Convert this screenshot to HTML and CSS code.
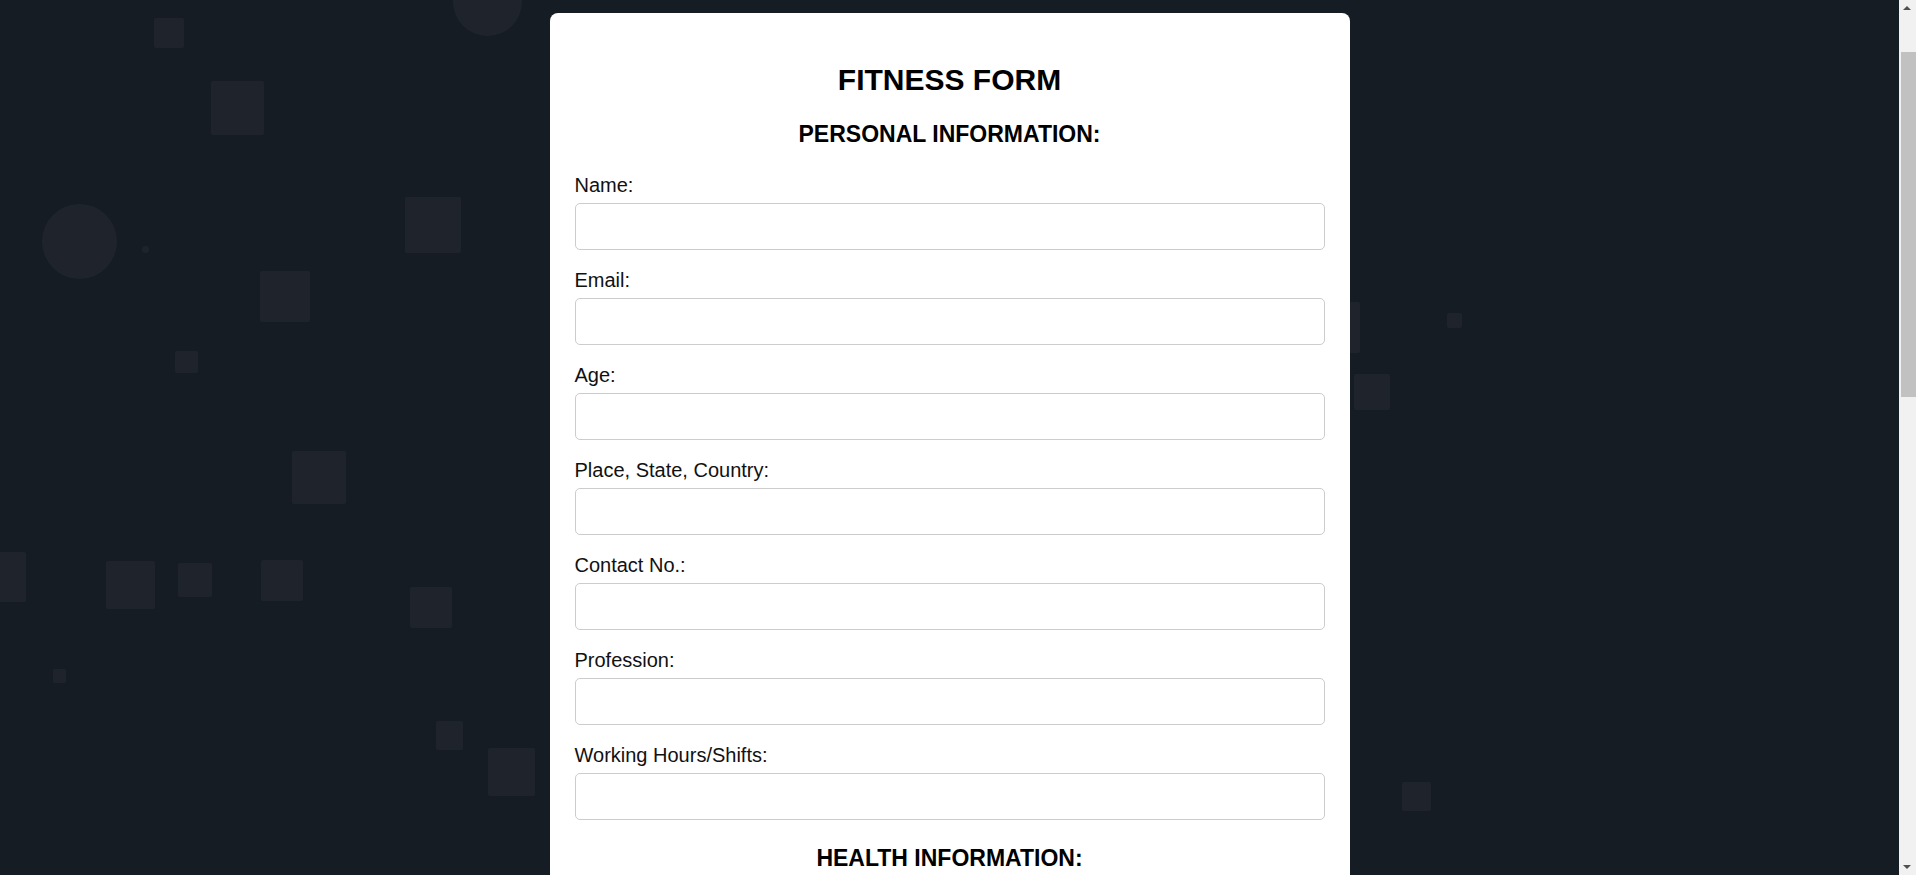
FILE: index.html
```html
<!DOCTYPE html>
<html lang="en">
<head>
<meta charset="utf-8">
<title>Fitness Form</title>
<link rel="stylesheet" href="styles.css">
</head>
<body>
<div class="bg" aria-hidden="true">
  <span class="shape sq" style="left:154px;top:18px;width:30px;height:30px"></span>
  <span class="shape sq" style="left:211px;top:81px;width:53px;height:54px"></span>
  <span class="shape ci" style="left:453px;top:-33px;width:69px;height:69px"></span>
  <span class="shape ci" style="left:42px;top:204px;width:75px;height:75px"></span>
  <span class="shape ci" style="left:142px;top:246px;width:7px;height:7px"></span>
  <span class="shape sq" style="left:405px;top:197px;width:56px;height:56px"></span>
  <span class="shape sq" style="left:260px;top:271px;width:50px;height:51px"></span>
  <span class="shape sq" style="left:175px;top:351px;width:23px;height:22px"></span>
  <span class="shape sq" style="left:292px;top:451px;width:54px;height:53px"></span>
  <span class="shape sq" style="left:-24px;top:552px;width:50px;height:50px"></span>
  <span class="shape sq" style="left:106px;top:561px;width:49px;height:48px"></span>
  <span class="shape sq" style="left:178px;top:563px;width:34px;height:34px"></span>
  <span class="shape sq" style="left:261px;top:560px;width:42px;height:41px"></span>
  <span class="shape sq" style="left:410px;top:587px;width:42px;height:41px"></span>
  <span class="shape sq" style="left:53px;top:669px;width:13px;height:14px"></span>
  <span class="shape sq" style="left:436px;top:721px;width:27px;height:29px"></span>
  <span class="shape sq" style="left:488px;top:748px;width:47px;height:48px"></span>
  <span class="shape sq" style="left:1310px;top:302px;width:50px;height:51px"></span>
  <span class="shape sq" style="left:1447px;top:313px;width:15px;height:15px"></span>
  <span class="shape sq" style="left:1354px;top:374px;width:36px;height:36px"></span>
  <span class="shape sq" style="left:1402px;top:782px;width:29px;height:29px"></span>
</div>

<div class="scrollbar" aria-hidden="true">
  <span class="sb-arrow sb-up"></span>
  <span class="sb-track"><span class="sb-thumb"></span></span>
  <span class="sb-arrow sb-down"></span>
</div>

<main class="card">
  <h1 class="title">FITNESS FORM</h1>
  <form class="form">
    <section class="section">
      <h2 class="section-title">PERSONAL INFORMATION:</h2>
      <div class="field"><label class="label" for="name">Name:</label><input class="input" id="name" type="text"></div>
      <div class="field"><label class="label" for="email">Email:</label><input class="input" id="email" type="email"></div>
      <div class="field"><label class="label" for="age">Age:</label><input class="input" id="age" type="number"></div>
      <div class="field"><label class="label" for="place">Place, State, Country:</label><input class="input" id="place" type="text"></div>
      <div class="field"><label class="label" for="contact">Contact No.:</label><input class="input" id="contact" type="tel"></div>
      <div class="field"><label class="label" for="profession">Profession:</label><input class="input" id="profession" type="text"></div>
      <div class="field"><label class="label" for="hours">Working Hours/Shifts:</label><input class="input" id="hours" type="text"></div>
    </section>
    <section class="section">
      <h2 class="section-title">HEALTH INFORMATION:</h2>
      <div class="field"><label class="label" for="height">Height:</label><input class="input" id="height" type="text"></div>
      <div class="field"><label class="label" for="weight">Weight:</label><input class="input" id="weight" type="text"></div>
      <div class="field"><label class="label" for="medical">Medical Conditions:</label><input class="input" id="medical" type="text"></div>
      <div class="field"><label class="label" for="meds">Medications:</label><input class="input" id="meds" type="text"></div>
      <div class="field"><label class="label" for="injuries">Past Injuries:</label><input class="input" id="injuries" type="text"></div>
      <div class="field"><label class="label" for="diet">Diet Preference:</label><input class="input" id="diet" type="text"></div>
      <div class="field"><label class="label" for="activity">Current Activity Level:</label><input class="input" id="activity" type="text"></div>
      <div class="field"><label class="label" for="goals">Fitness Goals:</label><input class="input" id="goals" type="text"></div>
      <div class="field"><label class="label" for="sleep">Sleep Hours:</label><input class="input" id="sleep" type="text"></div>
    </section>
    <div class="actions"><button class="submit" type="submit">SUBMIT</button></div>
  </form>
</main>
</body>
</html>
```

FILE: styles.css
```css
html, body {
  margin: 0;
  padding: 0;
}

html {
  scrollbar-width: none;
}

body {
  background: #161c24;
  font-family: "Liberation Sans", Arial, sans-serif;
  color: #111;
  min-height: 100vh;
  padding-right: 17px;
}

.bg {
  position: fixed;
  inset: 0;
  overflow: hidden;
  z-index: 0;
}

.shape {
  position: absolute;
  display: block;
  background: rgba(255, 255, 255, 0.04);
}

.shape.sq {
  border-radius: 2px;
}

.shape.ci {
  border-radius: 50%;
}

/* classic browser scrollbar, drawn over the right edge */
.scrollbar {
  position: fixed;
  top: 0;
  right: 0;
  bottom: 0;
  width: 17px;
  z-index: 5;
  display: flex;
  flex-direction: column;
  background: #f1f1f1;
}

.sb-arrow {
  position: relative;
  height: 17px;
  flex: none;
}

.sb-arrow::after {
  content: "";
  position: absolute;
  left: 4px;
  border-left: 4px solid transparent;
  border-right: 4px solid transparent;
}

.sb-up::after {
  top: 6px;
  border-bottom: 4px solid #505050;
}

.sb-down::after {
  top: 7px;
  border-top: 4px solid #505050;
}

.sb-track {
  flex: 1;
  padding-top: 35px;
}

.sb-thumb {
  display: block;
  height: 345px;
  margin-left: 2px;
  background: #c1c1c1;
}

.card {
  position: relative;
  z-index: 1;
  width: 800px;
  box-sizing: border-box;
  margin: 13px auto 40px;
  padding: 50px 25px 40px;
  background: #fff;
  border-radius: 8px;
}

.title {
  margin: 0;
  font-size: 30px;
  line-height: 33px;
  font-weight: 700;
  text-align: center;
  color: #000;
}

.form {
  margin: 0;
}

.section-title {
  margin: 25px 0 27px;
  font-size: 23px;
  line-height: 26px;
  font-weight: 700;
  text-align: center;
  color: #000;
}

.field {
  margin-bottom: 19px;
}

.label {
  display: block;
  margin-bottom: 6px;
  font-size: 20px;
  line-height: 23px;
  color: #111;
}

.input {
  display: block;
  width: 100%;
  height: 47px;
  box-sizing: border-box;
  margin: 0;
  padding: 10px 12px;
  border: 1px solid #cccccc;
  border-radius: 5px;
  background: #fff;
  font-family: inherit;
  font-size: 18px;
  outline: none;
}

.actions {
  display: flex;
  justify-content: center;
  margin-top: 30px;
}

.submit {
  padding: 12px 40px;
  border: 0;
  border-radius: 5px;
  background: #161c24;
  color: #fff;
  font-family: inherit;
  font-size: 20px;
  font-weight: 700;
}
```
